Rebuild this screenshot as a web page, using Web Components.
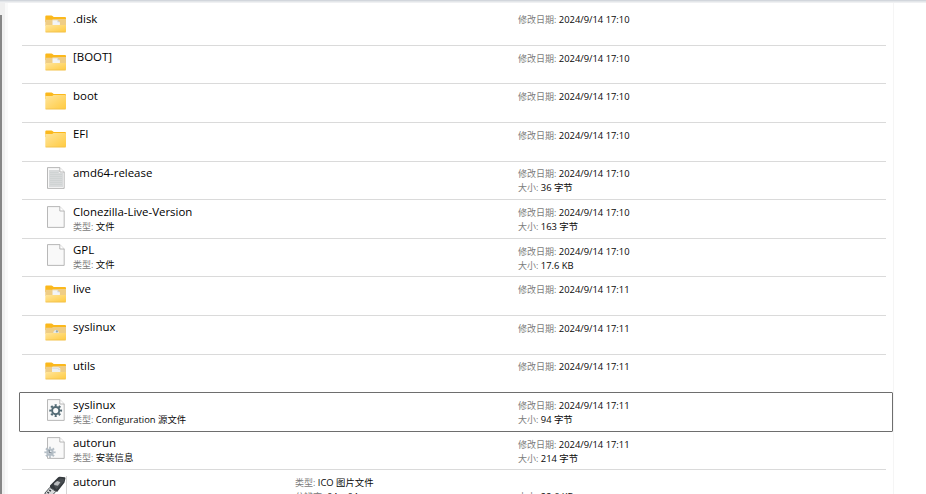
<!DOCTYPE html>
<html lang="zh-CN">
<head>
<meta charset="utf-8">
<title>文件</title>
<style>
 html, body {
  margin: 0;
  height: 100%;
  overflow: hidden;
  background: #fff;
 }
</style>
</head>
<body>
<file-window></file-window>
<script>
const FOLDER_BACK = /* html */
 `<defs>
   <linearGradient id="f" x1="0" y1="0" x2="1" y2="1">
    <stop offset="0" stop-color="#ffe59c"/>
    <stop offset="1" stop-color="#ffca3f"/>
   </linearGradient>
  </defs>
  <path d="M.3 4.5q0-1 1-1h5.2q.6 0 1 .4l1.2 1H20q1 0 1 1v4H.3z" fill="#fbb81c"/>`
const FOLDER_FULL = FOLDER_BACK + /* html */
 `<path d="M.3 7.8h6.5l1.4-.9H21v7H.3z" fill="#efcd85"/>`
const FOLDER_FRONT = /* html */
 `<path d="M.3 13H21v6.3q0 1-1 1H1.3q-1 0-1-1z" fill="url(#f)"/>
  <path d="M.5 20h20.3" stroke="#eebd4c" stroke-width=".7"/>`
const PAGE = /* html */
 `<path d="M2.5 1.6h12.3l4.4 4.4v16.4H2.5z" fill="#f9f9f9" stroke="#a6a6a6" stroke-width=".8"/>
  <path d="M14.8 1.6V6h4.4" fill="#fff" stroke="#a6a6a6" stroke-width=".8"/>`

/** Gear teeth drawn with a dashed ring. */
const gear = (x, y, r, color, hole) => /* html */
 `<circle cx="${x}" cy="${y}" r="${r}" fill="none" stroke="${color}" stroke-width="2.2"
   pathLength="16" stroke-dasharray="1 1" stroke-dashoffset=".5"/>
  <circle cx="${x}" cy="${y}" r="${r - 1.7}" fill="${hole}" stroke="${color}" stroke-width="2"/>`

const ICONS = {
 "folder": FOLDER_BACK + /* html */
  `<path d="M.3 7.1h6.4q.5 0 .9-.4l.9-.6H20q1 0 1 1v12.2q0 1-1 1H1.3q-1 0-1-1z" fill="url(#f)"/>
   <path d="M.5 20h20.3" stroke="#eebd4c" stroke-width=".7"/>`,
 "folder-page": FOLDER_FULL + /* html */
  `<path d="M7.5 8.2h5l2.4 2V14H7.5z" fill="#f3f4f5"/>
   <path d="M12.5 8.2v2h2.4" fill="#c9ced2"/>` + FOLDER_FRONT,
 "folder-config": FOLDER_FULL + /* html */
  `<path d="M8.3 13q0-2.6 2.7-2.9 2.8.3 2.8 2.9z" fill="#e4e9ea"/>
   <circle cx="11.9" cy="11.4" r="1.1" fill="#94a6ac"/>` + FOLDER_FRONT,
 "folder-files": FOLDER_FULL + /* html */
  `<path d="M7 8.2h6.5l1.8 1.2V14H7z" fill="#eef0f1"/>
   <path d="M7.2 9.5h6.3v1H15" fill="none" stroke="#d2d6d8" stroke-width=".6"/>`
  + FOLDER_FRONT,
 "text": PAGE + /* html */
  `<path d="M4 4h10v3h4v14H4z" fill="#d8dadb"/>
   <path d="M5 6.5h8M5 8.5h12M5 10.5h12M5 12.5h12M5 14.5h12M5 16.5h12M5 18.5h12"
    stroke="#cdd0d1" stroke-width=".8"/>`,
 "file": PAGE,
 "config": PAGE + gear(10.7, 12.6, 5.3, "#526a74", "#fafafa"),
 "setup": PAGE + gear(5, 16.3, 4.5, "#b3bdc5", "#e6ebf0")
  + /* html */ `<path d="M4.2 14.2v2.6h2.4" fill="none" stroke="#66737d"/>`,
 "usb": /* html */
  `<path d="M21.5 1v26" stroke="#bbb" stroke-width=".6"/>
   <path d="m5 10.6 8.2-8.3q.7-.7 1.6-.6l5 .6q.9.3.6 1.3l-.9 4-7.4 9.3-7.1-4.4z" fill="#34393d"/>
   <path d="m8.4 9.6 6.9-6.3 4.1.8-.6 2.4-7.4 7.9z" fill="#484d51"/>
   <path d="m9.2 8.2 3-2.3 3.2 1.4-2.6 3.5-3.6-.9z" fill="#b9bcbe"/>
   <path d="m4.8 12.4 6 4-4.8 5.4-6.3-3.4z" fill="#d9dbdc" stroke="#4e5458"/>
   <path d="m4.2 15 1.8 1.1M2.3 17.1l1.8 1" stroke="#3b4044" stroke-width="1.5"/>`
}

class FileIcon extends HTMLElement {
 constructor() {
  super()
  this.attachShadow({ mode: "open" })
 }
 connectedCallback() {
  const kind = this.getAttribute("kind") || "file"
  this.shadowRoot.innerHTML = /* html */
   `<style>
     :host {
      display: block;
      width: 22px;
      height: 26px;
     }
     svg {
      display: block;
      overflow: visible;
     }
    </style>
    <svg width="22" height="26" viewBox="0 0 22 26">${ICONS[kind]}</svg>`
 }
}
customElements.define("file-icon", FileIcon)

class FileProp extends HTMLElement {
 constructor() {
  super()
  this.attachShadow({ mode: "open" })
 }
 connectedCallback() {
  this.shadowRoot.innerHTML = /* html */
   `<style>
     :host {
      display: block;
      font-size: 9.4px;
      line-height: 14px;
      height: 14px;
      color: #080808;
      white-space: nowrap;
     }
     span {
      font-size: 9px;
      color: #7c7c7c;
     }
    </style>
    <span>${this.getAttribute("label")}:</span> <slot></slot>`
 }
}
customElements.define("file-prop", FileProp)

class FileRow extends HTMLElement {
 constructor() {
  super()
  this.attachShadow({ mode: "open" })
 }
 connectedCallback() {
  this.shadowRoot.innerHTML = /* html */
   `<style>
     :host {
      display: grid;
      grid-template-columns: 28px 222px 223px 1fr;
      box-sizing: border-box;
      height: 38.6px;
      margin: 0 7px 0 3px;
      padding-left: 23px;
      border-bottom: 1px solid #dadada;
     }
     :host([before-selected]) {
      border-bottom-color: transparent;
     }
     :host([selected]) {
      margin: -1px 0 0;
      height: 39.6px;
      padding-left: 25px;
      border: 1px solid #6e6e6e;
      border-radius: 1px;
     }
     file-icon {
      margin-top: 4.4px;
     }
     .name {
      font-size: 11.45px;
      line-height: 16px;
      height: 16px;
      color: #000;
      white-space: nowrap;
     }
     .main {
      padding-top: 3.4px;
     }
     .side {
      padding-top: 5.8px;
     }
    </style>
    <file-icon kind="${this.getAttribute("icon")}"></file-icon>
    <div class="main">
     <div class="name">${this.getAttribute("name")}</div>
     <slot name="type"></slot>
    </div>
    <div class="side"><slot name="middle"></slot></div>
    <div class="side"><slot name="end"></slot></div>`
 }
}
customElements.define("file-row", FileRow)

const FILES = [
 { icon: "folder-page", name: ".disk", date: "17:10" },
 { icon: "folder-page", name: "[BOOT]", date: "17:10" },
 { icon: "folder", name: "boot", date: "17:10" },
 { icon: "folder", name: "EFI", date: "17:10" },
 { icon: "text", name: "amd64-release", date: "17:10", size: "36 字节" },
 { icon: "file", name: "Clonezilla-Live-Version", type: "文件", date: "17:10", size: "163 字节" },
 { icon: "file", name: "GPL", type: "文件", date: "17:10", size: "17.6 KB" },
 { icon: "folder-page", name: "live", date: "17:11" },
 { icon: "folder-config", name: "syslinux", date: "17:11" },
 { icon: "folder-files", name: "utils", date: "17:11", attrs: "before-selected" },
 { icon: "config", name: "syslinux", type: "Configuration 源文件", date: "17:11", size: "94 字节", attrs: "selected" },
 { icon: "setup", name: "autorun", type: "安装信息", date: "17:11", size: "214 字节" },
 { icon: "usb", name: "autorun", middle: ["ICO 图片文件", "64 x 64"], size: "22.6 KB" }
]

function rowHtml(file) {
 let inner = ""
 if (file.type) {
  inner += `<file-prop slot="type" label="类型">${file.type}</file-prop>`
 }
 if (file.middle) {
  inner += `<file-prop slot="middle" label="类型">${file.middle[0]}</file-prop>
   <file-prop slot="middle" label="分辨率">${file.middle[1]}</file-prop>`
 }
 if (file.date) {
  inner += `<file-prop slot="end" label="修改日期">2024/9/14 ${file.date}</file-prop>`
 } else {
  // keeps the size on the second line
  inner += `<div slot="end" style="height: 14px"></div>`
 }
 if (file.size) {
  inner += `<file-prop slot="end" label="大小">${file.size}</file-prop>`
 }
 return `<file-row icon="${file.icon}" name="${file.name}" ${file.attrs || ""}>${inner}</file-row>`
}

class FileWindow extends HTMLElement {
 constructor() {
  super()
  this.attachShadow({ mode: "open" }).innerHTML = /* html */
   `<style>
     :host {
      display: grid;
      grid-template: 3px 1fr / 8px 1fr 32px;
      height: 494px;
      overflow: hidden;
      font-family: "Open Sans", "Noto Sans CJK SC", sans-serif;
     }
     .top {
      grid-column: 1 / -1;
      background: linear-gradient(#d2d6dc 0 1px, #e3e6e9 1px 2px, #eff0f2 2px);
     }
     .edge {
      background: #f0f0f0;
      border-right: 3px solid #fafafa;
     }
     .edge div {
      width: 2px;
      height: 100%;
      margin-top: 12px;
      background: #868686;
     }
     .list {
      padding: 4.2px 0 0 11px;
      border-right: 1px solid #f5f5f5;
      min-height: 0;
     }
    </style>
    <div class="top"></div>
    <div class="edge"><div></div></div>
    <div class="list">${FILES.map(rowHtml).join("")}</div>`
 }
}
customElements.define("file-window", FileWindow)
</script>
</body>
</html>
